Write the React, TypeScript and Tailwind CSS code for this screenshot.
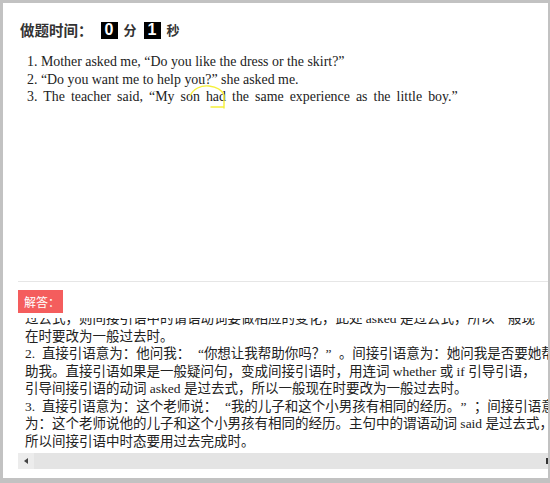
const serif = { fontFamily: '"Liberation Serif", "Noto Sans CJK SC", serif' };
const cjk = { fontFamily: '"Noto Sans CJK SC", "Liberation Sans", sans-serif' };

const questions = [
  "1. Mother asked me, \u201cDo you like the dress or the skirt?\u201d",
  "2. \u201cDo you want me to help you?\u201d she asked me.",
];

const answerLines = [
  "过去式，则间接引语中的谓语动词要做相应的变化，此处 asked 是过去式，所以一般现",
  "在时要改为一般过去时。",
  "2.\u00a0\u00a0直接引语意为：他问我：“你想让我帮助你吗？”。间接引语意为：她问我是否要她帮",
  "助我。直接引语如果是一般疑问句，变成间接引语时，用连词 whether 或 if 引导引语，",
  "引导间接引语的动词 asked 是过去式，所以一般现在时要改为一般过去时。",
  "3.\u00a0\u00a0直接引语意为：这个老师说：“我的儿子和这个小男孩有相同的经历。”；间接引语意",
  "为：这个老师说他的儿子和这个小男孩有相同的经历。主句中的谓语动词 said 是过去式，",
  "所以间接引语中时态要用过去完成时。",
];

// full-width quotes, as the original page's font draws them
function AnswerLine({ text }: { text: string }) {
  const parts = text.split(/([“”])/);
  return (
    <div className="whitespace-nowrap">
      {parts.map((p, i) =>
        p === "“" || p === "”" ? (
          <span key={i} className={`inline-block w-[1em] ${p === "“" ? "text-right" : "text-left"}`}>
            {p}
          </span>
        ) : (
          <span key={i}>{p}</span>
        )
      )}
    </div>
  );
}

function TimeBox({ value }: { value: string }) {
  return (
    <span
      className="flex h-[17px] w-[17px] items-center justify-center bg-black text-[16px] font-bold leading-none text-white"
      style={{ fontFamily: '"Liberation Sans", sans-serif' }}
    >
      {value}
    </span>
  );
}

export default function App() {
  return (
    <div className="flex h-[483px] w-[550px] flex-col overflow-hidden border-t-[3px] border-r-[2px] border-b-[5px] border-l-[3px] border-[#c2c2c2] bg-white">
      <div className="h-[278px] shrink-0">
        <div className="mt-[17px] flex h-[20px] items-center pl-[17px] text-[14.5px] font-bold text-[#333]" style={cjk}>
          <span>做题时间：</span>
          <span className="ml-[8px]"><TimeBox value="0" /></span>
          <span className="ml-[6px] text-[13px]">分</span>
          <span className="ml-[7px]"><TimeBox value="1" /></span>
          <span className="ml-[6px] text-[13px]">秒</span>
        </div>
        <div className="mt-[13px] pl-[24px] text-[13.9px] leading-[17.5px] text-[#222]" style={serif}>
          {questions.map((q) => (
            <div key={q} className="whitespace-nowrap">{q}</div>
          ))}
          <div className="whitespace-nowrap [word-spacing:2.6px]">
            3. The teacher said, “My son{" "}
            <span className="relative">
              had
              <svg className="absolute left-[-17px] top-[-5px]" width="40" height="26" viewBox="0 0 40 26">
                <path
                  d="M1 12 C4 5 12 1 20 2 C28 3 33 6 35 11 L35 24 M35 23 L22 23"
                  fill="none"
                  stroke="#f5f03a"
                  strokeWidth="1.4"
                  strokeLinecap="round"
                />
              </svg>
            </span>{" "}
            the same experience as the little boy.”
          </div>
        </div>
      </div>
      <div className="ml-[15px] h-[1px] shrink-0 bg-[#e6e6e6]" />
      <div className="ml-[15px] mt-[8px] flex h-[23px] w-[45px] shrink-0 items-center bg-[#f45d5d] pl-[6px] text-[12px] text-white" style={cjk}>
        解答：
      </div>
      <div className="mt-[5px] ml-[15px] h-[135px] shrink-0 overflow-hidden">
        <div className="-mt-[8px] pl-[7px] text-[13.5px] leading-[17.5px] text-[#222]" style={serif}>
          {answerLines.map((l) => (
            <AnswerLine key={l} text={l} />
          ))}
        </div>
      </div>
      <div className="ml-[15px] flex h-[16px] shrink-0 items-center bg-[#e4e4e4]">
        <div className="flex h-full w-[16px] items-center justify-center bg-[#ececec]">
          <span className="h-0 w-0 border-y-[3px] border-r-[4px] border-y-transparent border-r-[#444]" />
        </div>
        <div className="flex-1" />
        <div className="h-[6px] w-[2px] bg-[#333]" />
      </div>
    </div>
  );
}
